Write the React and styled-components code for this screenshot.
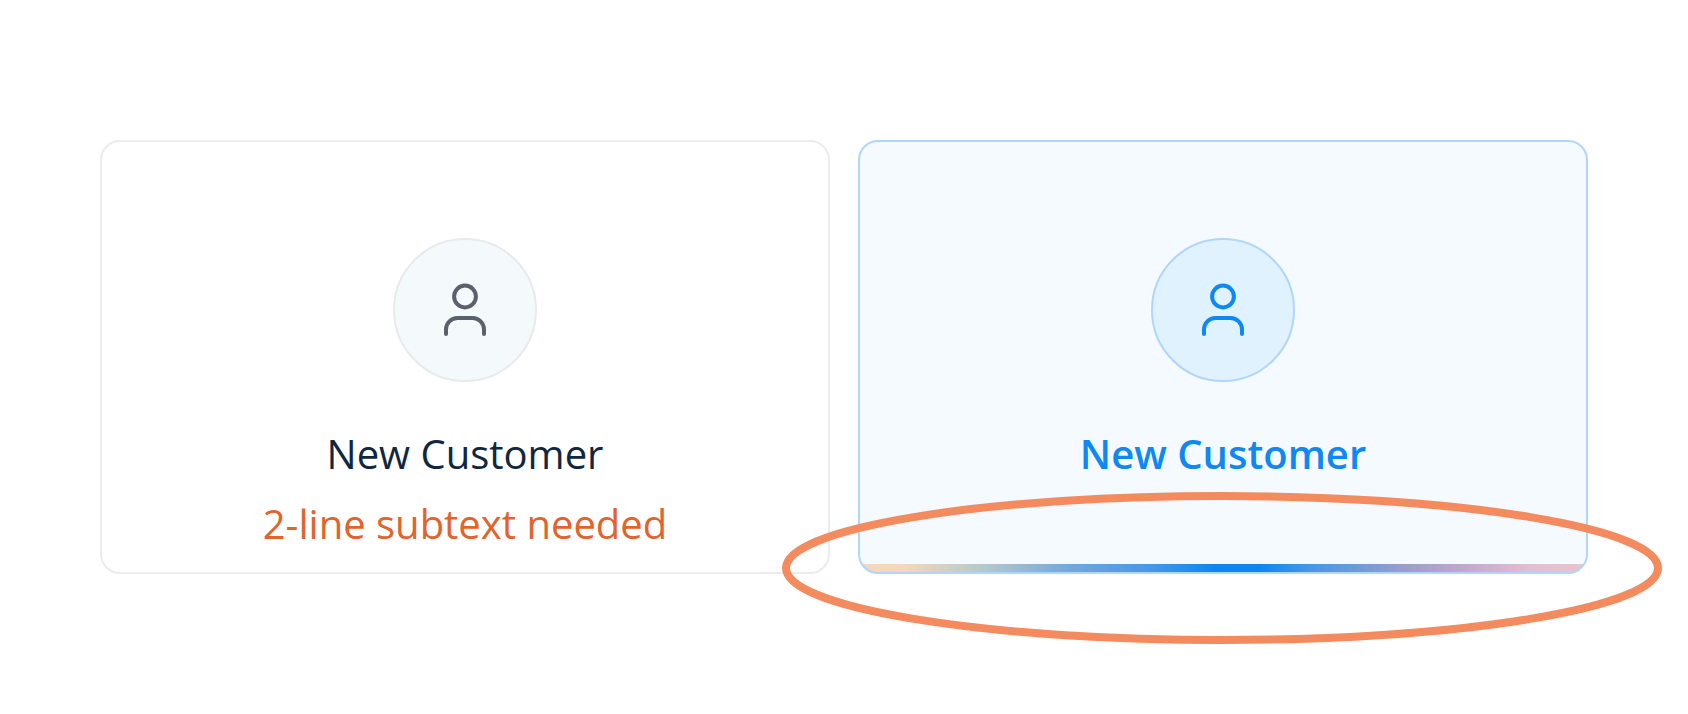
import React from "react";
import styled, { createGlobalStyle } from "styled-components";

const GlobalStyle = createGlobalStyle`
  * {
    box-sizing: border-box;
  }
  body {
    margin: 0;
    background: #fff;
    font-family: "Open Sans", "Noto Sans", sans-serif;
  }
`;

const Options = styled.main`
  display: grid;
  grid-template-columns: repeat(2, minmax(0, 1fr));
  gap: 28px;
  padding: 140px 100px;
`;

const Slot = styled.div`
  position: relative;
  display: flex;
`;

const Card = styled.button`
  flex: 1;
  display: flex;
  flex-direction: column;
  align-items: center;
  justify-content: flex-start;
  padding: 96px 24px 24px;
  border: 2px solid ${({ $selected }) => ($selected ? "#b0d6fb" : "#ebecec")};
  border-radius: 20px;
  background: ${({ $selected }) => ($selected ? "#f4faff" : "#fff")};
  color: ${({ $selected }) => ($selected ? "#0e88f2" : "#10273f")};
  font-family: inherit;
  cursor: pointer;

  ${({ $selected }) =>
    $selected &&
    `
    background-image: linear-gradient(
      90deg,
      #f6d7b9 6%,
      #b4c9cb 17%,
      #74a7da 29%,
      #4598e6 40%,
      #0c87f0 49%,
      #0c87f0 55%,
      #4598e6 62%,
      #9a9fc8 75%,
      #bfa8cd 83%,
      #e6bcd2 92%,
      #eac3cb 100%
    );
    background-size: 100% 8px;
    background-position: left bottom;
    background-repeat: no-repeat;
  `}
`;

const Avatar = styled.span`
  display: flex;
  align-items: center;
  justify-content: center;
  width: 144px;
  height: 144px;
  margin-bottom: 48px;
  border: 2px solid ${({ $selected }) => ($selected ? "#b0d6fb" : "#e8eaec")};
  border-radius: 50%;
  background: ${({ $selected }) => ($selected ? "#e1f2ff" : "#f4f9fc")};
  color: ${({ $selected }) => ($selected ? "#0e88f2" : "#5a606c")};
`;

const Title = styled.span`
  font-size: 40px;
  line-height: 48px;
  font-weight: ${({ $selected }) => ($selected ? 600 : 400)};
`;

const Subtext = styled.span`
  margin-top: 22px;
  color: #e2642d;
  font-size: 40px;
  line-height: 48px;
  font-weight: 500;
`;

// hand drawn style marker that goes around the bottom edge of a card
const Marker = styled.svg`
  position: absolute;
  top: 352px;
  left: -76px;
  width: calc(100% + 150px);
  height: calc(100% - 282px);
  overflow: visible;
  pointer-events: none;

  ellipse {
    rx: calc(50% - 4px);
    ry: calc(50% - 4px);
    fill: none;
    stroke: #f38b5e;
    stroke-width: 8px;
  }
`;

const UserIcon = () => (
  <svg
    width="64"
    height="64"
    viewBox="0 0 64 64"
    fill="none"
    stroke="currentColor"
    strokeWidth="4"
    strokeLinecap="round"
    aria-hidden="true"
  >
    <circle cx="32" cy="18.5" r="10.9" />
    <path d="M13 56V51.5A11.5 11.5 0 0 1 24.5 40H39.5A11.5 11.5 0 0 1 51 51.5V56" />
  </svg>
);

const OptionCard = ({ title, subtext, selected, marked }) => (
  <Slot>
    <Card type="button" aria-pressed={!!selected} $selected={selected}>
      <Avatar $selected={selected}>
        <UserIcon />
      </Avatar>
      <Title $selected={selected}>{title}</Title>
      {subtext && <Subtext>{subtext}</Subtext>}
    </Card>
    {marked && (
      <Marker aria-hidden="true">
        <ellipse cx="50%" cy="50%" />
      </Marker>
    )}
  </Slot>
);

const App = () => (
  <>
    <GlobalStyle />
    <Options>
      <OptionCard title="New Customer" subtext="2-line subtext needed" />
      <OptionCard title="New Customer" selected marked />
    </Options>
  </>
);

export default App;
